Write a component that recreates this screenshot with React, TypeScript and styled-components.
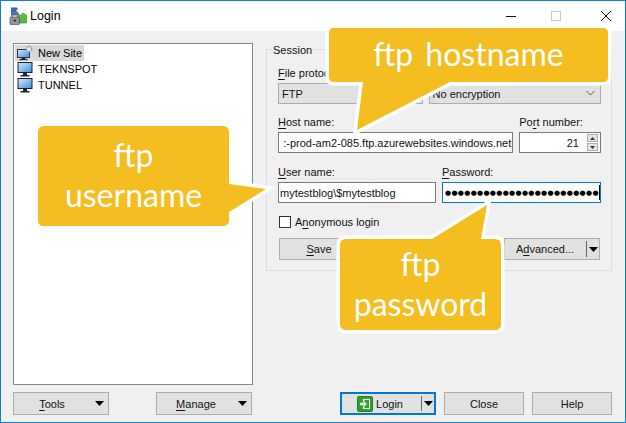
import React from "react";
import styled, { createGlobalStyle } from "styled-components";

const Global = createGlobalStyle`
  html, body { margin: 0; padding: 0; background: #fff; }
  * { box-sizing: border-box; }
`;

const Window = styled.div`
  position: relative;
  width: 626px;
  height: 423px;
  overflow: hidden;
  border: 1px solid #0f7fd6;
  display: flex;
  flex-direction: column;
  font-family: "Liberation Sans", Arial, sans-serif;
  font-size: 11px;
  color: #111;
  background: #f0f0f0;
  u { text-underline-offset: 1.5px; text-decoration-thickness: 1px; }
`;

const TitleBar = styled.div`
  height: 30px;
  flex: none;
  background: #fff;
  display: flex;
  align-items: center;
  padding: 0 0 0 8px;
`;

const TitleText = styled.span`
  margin-left: 3px;
  font-size: 12.5px;
  color: #000;
`;

const WindowControls = styled.div`
  margin-left: auto;
  display: flex;
  align-items: center;
`;

const ControlGlyph = styled.svg`
  display: block;
  width: 12px;
  height: 12px;
  margin-right: ${(p: { $gap: number }) => p.$gap}px;
`;

const Body = styled.div`
  flex: 1;
  display: grid;
  grid-template-columns: 240px 346px;
  grid-template-rows: 342px 23px;
  column-gap: 13px;
  row-gap: 7px;
  padding: 12px 0 0 12px;
`;

const Tree = styled.div`
  background: #fff;
  border: 1px solid #828790;
  padding: 1px;
`;

const TreeRow = styled.div<{ $selected?: boolean }>`
  display: flex;
  align-items: center;
  width: ${(p) => (p.$selected ? "69px" : "auto")};
  height: 16px;
  padding-left: 2px;
  gap: 5px;
  white-space: nowrap;
  background: ${(p) => (p.$selected ? "#d9d9d9" : "transparent")};
  color: #000;
  svg { flex: none; }
`;

const RightColumn = styled.div`
  padding-top: 6px;
`;

const Group = styled.div`
  position: relative;
  height: 222px;
  border: 1px solid #dcdcdc;
  padding: 16px 10px 0 11px;
  display: flex;
  flex-direction: column;
`;

const Legend = styled.span`
  position: absolute;
  left: 5px;
  top: -7px;
  padding: 0 1px;
  line-height: 14px;
  background: #f0f0f0;
`;

const Row = styled.div<{ $mt?: number }>`
  display: flex;
  gap: 6px;
  margin-top: ${(p) => p.$mt ?? 0}px;
`;

const Field = styled.div<{ $w: number }>`
  width: ${(p) => p.$w}px;
  display: flex;
  flex-direction: column;
  gap: 3px;
`;

const Label = styled.label`
  line-height: 14px;
  height: 14px;
  white-space: nowrap;
`;

const Input = styled.div<{ $focused?: boolean; $end?: boolean }>`
  height: 21px;
  background: #fff;
  border: 1px solid ${(p) => (p.$focused ? "#0078d7" : "#7a7a7a")};
  display: flex;
  align-items: center;
  justify-content: ${(p) => (p.$end ? "flex-end" : "flex-start")};
  padding: 0 1px;
  overflow: hidden;
  white-space: nowrap;
  position: relative;
`;

const Select = styled.div`
  height: 21px;
  background: #e1e1e1;
  border: 1px solid #adadad;
  display: flex;
  align-items: center;
  padding: 0 16px 0 3px;
  position: relative;
  white-space: nowrap;
`;

const Chevron = styled.svg`
  position: absolute;
  right: 5px;
  top: 6px;
  width: 9px;
  height: 6px;
`;

const Dots = styled.span`
  font-family: "DejaVu Sans", sans-serif;
  font-size: 7px;
  line-height: 14px;
  letter-spacing: 0.3px;
  margin-left: 1px;
  color: #000;
`;

const Caret = styled.span`
  width: 1px;
  height: 15px;
  background: #000;
`;

const PortValue = styled.span`
  margin-left: auto;
  margin-right: 20px;
`;

const Spinner = styled.div`
  position: absolute;
  right: 2px;
  top: 1px;
  bottom: 1px;
  width: 11px;
  display: flex;
  flex-direction: column;
  gap: 1px;
`;

const SpinButton = styled.div`
  flex: 1;
  background: #e5e5e5;
  border: 1px solid #adadad;
  display: flex;
  align-items: center;
  justify-content: center;
`;

const Tri = styled.svg`
  width: 5px;
  height: 3px;
  display: block;
`;

const CheckRow = styled.div`
  margin-top: 12px;
  display: flex;
  align-items: center;
  gap: 4px;
  padding-left: 1px;
  height: 13px;
`;

const CheckBox = styled.span`
  width: 12px;
  height: 12px;
  background: #fff;
  border: 1px solid #333;
`;

const Actions = styled.div`
  margin-top: 10px;
  display: flex;
  justify-content: space-between;
  padding: 0 1px;
`;

const Button = styled.div<{ $w: number; $h?: number; $primary?: boolean }>`
  position: relative;
  width: ${(p) => p.$w}px;
  height: ${(p) => p.$h ?? 23}px;
  background: #e1e1e1;
  border: ${(p) => (p.$primary ? "2px solid #0078d7" : "1px solid #adadad")};
  display: flex;
  align-items: center;
  justify-content: center;
  color: #111;
`;

const ArrowZone = styled.span<{ $split?: boolean }>`
  position: absolute;
  right: 0;
  top: 2px;
  bottom: 2px;
  width: 13px;
  border-left: ${(p) => (p.$split ? "1px solid #666" : "none")};
  display: flex;
  align-items: center;
  justify-content: center;
`;

const ArrowRight = styled(ArrowZone)`
  right: 2px;
`;

const DownTri = styled.svg`
  width: 9px;
  height: 5px;
  display: block;
`;

const ButtonLabel = styled.span<{ $shift?: number }>`
  position: relative;
  left: ${(p) => p.$shift ?? 0}px;
  display: flex;
  align-items: center;
  gap: 3px;
`;

const FooterLeft = styled.div`
  display: flex;
  justify-content: space-between;
  width: 239px;
`;

const FooterRight = styled.div`
  display: flex;
  justify-content: flex-end;
  gap: 8px;
`;

const Bubble = styled.div<{ $x: number; $y: number; $w: number; $h: number }>`
  position: absolute;
  left: ${(p) => p.$x}px;
  top: ${(p) => p.$y}px;
  width: ${(p) => p.$w}px;
  height: ${(p) => p.$h}px;
  display: flex;
  align-items: center;
  justify-content: center;
`;

const BubbleShape = styled.svg`
  position: absolute;
  inset: 0;
  width: 100%;
  height: 100%;
  overflow: visible;
  path {
    fill: #f4bd20;
    stroke: #fff;
    stroke-width: 7px;
    paint-order: stroke;
    stroke-linejoin: miter;
  }
`;

const BubbleText = styled.span`
  position: relative;
  top: -1px;
  font-family: "Lato", "Open Sans", sans-serif;
  font-size: 32px;
  line-height: 40px;
  word-spacing: 4px;
  color: #fff;
  text-align: center;
`;

const Monitor = () => (
  <svg width="16" height="15" viewBox="0 0 16 15">
    <defs>
      <linearGradient id="scr" x1="0" y1="0" x2="1" y2="1">
        <stop offset="0" stopColor="#d8ebfc" />
        <stop offset="1" stopColor="#3c8fe0" />
      </linearGradient>
    </defs>
    <rect x="1" y="0.5" width="14" height="10" fill="url(#scr)" stroke="#17202b" />
    <rect x="6" y="11" width="4" height="2" fill="#1c2733" />
    <rect x="3.5" y="13" width="9" height="1.5" fill="#1c2733" />
  </svg>
);

const NewSiteIcon = () => (
  <svg width="16" height="16" viewBox="0 0 16 16">
    <rect x="0.5" y="4.5" width="12" height="8" fill="url(#scr)" stroke="#2a3440" />
    <rect x="4.5" y="13" width="4" height="1.2" fill="#1c2733" />
    <rect x="2.5" y="14" width="8" height="1.2" fill="#1c2733" />
    <circle cx="12" cy="4" r="2.6" fill="#e4ebf3" stroke="#8fa3b8" strokeWidth="1.6" strokeDasharray="1.6 0.8" />
  </svg>
);

const AppIcon = () => (
  <svg width="18" height="18" viewBox="0 0 18 18">
    <path d="M2 0.5h6l1 1.5-2 1.5 3 3-3 2H2z" fill="#2e6fb8" />
    <path d="M8 6l3.5 2.5L14 6l3.5 2v8H9z" fill="#57bb45" stroke="#2f8a2a" strokeWidth="0.6" />
    <path d="M3.2 10V8a2.6 2.6 0 015.2 0v2" fill="none" stroke="#70787f" strokeWidth="1.3" />
    <rect x="1" y="10" width="9.5" height="7.5" rx="0.8" fill="#8f979f" stroke="#4c545c" strokeWidth="0.7" />
    <circle cx="5.8" cy="13.6" r="1.2" fill="#2a2f35" />
  </svg>
);

const LoginIcon = () => (
  <svg width="16" height="16" viewBox="0 0 16 16">
    <rect x="0.5" y="0.5" width="15" height="15" rx="1.5" fill="#2ea42a" stroke="#1c7f1d" />
    <path d="M6 3h7v10H6v-2.5h1.5V12H12V4H7.5v1.5H6z" fill="#fff" />
    <path d="M3 6.8h3.5V5L10 8l-3.5 3V9.2H3z" fill="#fff" />
  </svg>
);

const Down = () => (
  <DownTri viewBox="0 0 9 5">
    <path d="M0 0h9L4.5 5z" fill="#000" />
  </DownTri>
);

export default function App() {
  return (
    <Window>
      <Global />
      <TitleBar>
        <AppIcon />
        <TitleText>Login</TitleText>
        <WindowControls>
          <ControlGlyph $gap={33} viewBox="0 0 12 12">
            <path d="M1 6.5h10" stroke="#111" fill="none" />
          </ControlGlyph>
          <ControlGlyph $gap={38} viewBox="0 0 12 12">
            <rect x="1.5" y="1.5" width="9" height="9" fill="none" stroke="#c8c8c8" />
          </ControlGlyph>
          <ControlGlyph $gap={13} viewBox="0 0 12 12">
            <path d="M1 1l10 10M11 1L1 11" stroke="#111" fill="none" />
          </ControlGlyph>
        </WindowControls>
      </TitleBar>

      <Body>
        <Tree>
          <TreeRow $selected>
            <NewSiteIcon />
            New Site
          </TreeRow>
          <TreeRow>
            <Monitor />
            TEKNSPOT
          </TreeRow>
          <TreeRow>
            <Monitor />
            TUNNEL
          </TreeRow>
        </Tree>

        <RightColumn>
          <Group>
            <Legend>Session</Legend>
            <Row>
              <Field $w={145}>
                <Label>
                  <u>F</u>ile protocol:
                </Label>
                <Select>
                  FTP
                  <Chevron viewBox="0 0 9 6">
                    <path d="M0.5 1l4 4 4-4" fill="none" stroke="#555" />
                  </Chevron>
                </Select>
              </Field>
              <Field $w={173}>
                <Label />
                <Select>
                  No encryption
                  <Chevron viewBox="0 0 9 6">
                    <path d="M0.5 1l4 4 4-4" fill="none" stroke="#555" />
                  </Chevron>
                </Select>
              </Field>
            </Row>
            <Row $mt={11}>
              <Field $w={236}>
                <Label>
                  <u>H</u>ost name:
                </Label>
                <Input $end>:-prod-am2-085.ftp.azurewebsites.windows.net</Input>
              </Field>
              <Field $w={82}>
                <Label>
                  Po<u>r</u>t number:
                </Label>
                <Input>
                  <PortValue>21</PortValue>
                  <Spinner>
                    <SpinButton>
                      <Tri viewBox="0 0 5 3">
                        <path d="M2.5 0L5 3H0z" fill="#333" />
                      </Tri>
                    </SpinButton>
                    <SpinButton>
                      <Tri viewBox="0 0 5 3">
                        <path d="M0 0h5L2.5 3z" fill="#333" />
                      </Tri>
                    </SpinButton>
                  </Spinner>
                </Input>
              </Field>
            </Row>
            <Row $mt={12}>
              <Field $w={159}>
                <Label>
                  <u>U</u>ser name:
                </Label>
                <Input>mytestblog\$mytestblog</Input>
              </Field>
              <Field $w={159}>
                <Label>
                  <u>P</u>assword:
                </Label>
                <Input $focused>
                  <Dots>{"●".repeat(24)}</Dots>
                  <Caret />
                </Input>
              </Field>
            </Row>
            <CheckRow>
              <CheckBox />
              <span>
                A<u>n</u>onymous login
              </span>
            </CheckRow>
            <Actions>
              <Button $w={80} $h={22}>
                <u>S</u>ave
              </Button>
              <Button $w={96} $h={22}>
                <ButtonLabel $shift={-7}>
                  <span>
                    A<u>d</u>vanced...
                  </span>
                </ButtonLabel>
                <ArrowZone $split>
                  <Down />
                </ArrowZone>
              </Button>
            </Actions>
          </Group>
        </RightColumn>

        <FooterLeft>
          <Button $w={96}>
            <ButtonLabel $shift={-9}>
              <span>
                <u>T</u>ools
              </span>
            </ButtonLabel>
            <ArrowRight>
              <Down />
            </ArrowRight>
          </Button>
          <Button $w={96}>
            <ButtonLabel $shift={-8}>
              <span>
                <u>M</u>anage
              </span>
            </ButtonLabel>
            <ArrowRight>
              <Down />
            </ArrowRight>
          </Button>
        </FooterLeft>

        <FooterRight>
          <Button $w={96} $primary>
            <ButtonLabel $shift={-8}>
              <LoginIcon />
              Login
            </ButtonLabel>
            <ArrowZone $split>
              <Down />
            </ArrowZone>
          </Button>
          <Button $w={80}>Close</Button>
          <Button $w={80}>Help</Button>
        </FooterRight>
      </Body>

      <Bubble $x={328} $y={27} $w={279} $h={54}>
        <BubbleShape viewBox="0 0 279 54">
          <path d="M5 0H274Q279 0 279 5V49Q279 54 274 54H121L28 102L34 54H5Q0 54 0 49V5Q0 0 5 0Z" />
        </BubbleShape>
        <BubbleText>ftp hostname</BubbleText>
      </Bubble>

      <Bubble $x={37} $y={125} $w={191} $h={100}>
        <BubbleShape viewBox="0 0 191 100">
          <path d="M6 0H185Q191 0 191 6V58L228 63L191 86V94Q191 100 185 100H6Q0 100 0 94V6Q0 0 6 0Z" />
        </BubbleShape>
        <BubbleText>
          ftp
          <br />
          username
        </BubbleText>
      </Bubble>

      <Bubble $x={339} $y={238} $w={161} $h={91}>
        <BubbleShape viewBox="0 0 161 91">
          <path d="M6 0H92L147-34L141 0H155Q161 0 161 6V85Q161 91 155 91H6Q0 91 0 85V6Q0 0 6 0Z" />
        </BubbleShape>
        <BubbleText>
          ftp
          <br />
          password
        </BubbleText>
      </Bubble>
    </Window>
  );
}
